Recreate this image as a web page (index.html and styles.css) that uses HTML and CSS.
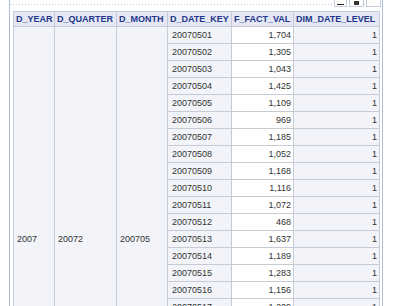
FILE: index.html
```html
<!DOCTYPE html>
<html>
<head>
<meta charset="utf-8">
<link rel="stylesheet" href="styles.css">
</head>
<body>
<div class="portlet">
  <div class="toolbar">
    <span class="tbtn"><span class="min"></span></span>
    <span class="tbtn wide"><span class="sq"></span></span>
    <span class="tbtn wide"></span>
  </div>
  <div class="content">
    <table class="grid">
      <colgroup>
        <col class="c1"><col class="c2"><col class="c3"><col class="c4"><col class="c5"><col class="c6">
      </colgroup>
      <thead>
        <tr><th>D_YEAR</th><th>D_QUARTER</th><th>D_MONTH</th><th>D_DATE_KEY</th><th>F_FACT_VAL</th><th>DIM_DATE_LEVEL</th></tr>
      </thead>
      <tbody>
        <tr><td class="grp" rowspan="25">2007</td><td class="grp" rowspan="25">20072</td><td class="grp" rowspan="25">200705</td><td class="key">20070501</td><td class="num">1,704</td><td class="lvl">1</td></tr>
        <tr><td class="key">20070502</td><td class="num">1,305</td><td class="lvl">1</td></tr>
        <tr><td class="key">20070503</td><td class="num">1,043</td><td class="lvl">1</td></tr>
        <tr><td class="key">20070504</td><td class="num">1,425</td><td class="lvl">1</td></tr>
        <tr><td class="key">20070505</td><td class="num">1,109</td><td class="lvl">1</td></tr>
        <tr><td class="key">20070506</td><td class="num">969</td><td class="lvl">1</td></tr>
        <tr><td class="key">20070507</td><td class="num">1,185</td><td class="lvl">1</td></tr>
        <tr><td class="key">20070508</td><td class="num">1,052</td><td class="lvl">1</td></tr>
        <tr><td class="key">20070509</td><td class="num">1,168</td><td class="lvl">1</td></tr>
        <tr><td class="key">20070510</td><td class="num">1,116</td><td class="lvl">1</td></tr>
        <tr><td class="key">20070511</td><td class="num">1,072</td><td class="lvl">1</td></tr>
        <tr><td class="key">20070512</td><td class="num">468</td><td class="lvl">1</td></tr>
        <tr><td class="key">20070513</td><td class="num">1,637</td><td class="lvl">1</td></tr>
        <tr><td class="key">20070514</td><td class="num">1,189</td><td class="lvl">1</td></tr>
        <tr><td class="key">20070515</td><td class="num">1,283</td><td class="lvl">1</td></tr>
        <tr><td class="key">20070516</td><td class="num">1,156</td><td class="lvl">1</td></tr>
        <tr><td class="key">20070517</td><td class="num">1,209</td><td class="lvl">1</td></tr>
        <tr><td class="key">20070518</td><td class="num">1,094</td><td class="lvl">1</td></tr>
        <tr><td class="key">20070519</td><td class="num">1,011</td><td class="lvl">1</td></tr>
        <tr><td class="key">20070520</td><td class="num">987</td><td class="lvl">1</td></tr>
        <tr><td class="key">20070521</td><td class="num">1,142</td><td class="lvl">1</td></tr>
        <tr><td class="key">20070522</td><td class="num">1,236</td><td class="lvl">1</td></tr>
        <tr><td class="key">20070523</td><td class="num">1,178</td><td class="lvl">1</td></tr>
        <tr><td class="key">20070524</td><td class="num">1,065</td><td class="lvl">1</td></tr>
        <tr><td class="key">20070525</td><td class="num">1,121</td><td class="lvl">1</td></tr>
      </tbody>
    </table>
  </div>
</div>
</body>
</html>
```
FILE: styles.css
```css
html, body {
  margin: 0;
  padding: 0;
  background: #ffffff;
  overflow: hidden;
}
body {
  font-family: "Liberation Sans", Arial, sans-serif;
  font-size: 9px;
  color: #333333;
}
.portlet {
  margin-left: 9px;
  width: 372px;
  border-left: 1px solid #a9bbd6;
  border-right: 1px solid #a9bbd6;
  height: 320px;
}
.toolbar {
  height: 11px;
  display: flex;
  justify-content: flex-end;
  align-items: flex-start;
  gap: 2px;
  padding-right: 1px;
  background-image: repeating-linear-gradient(90deg, #c3cde0 0 1px, transparent 1px 3px);
  background-size: 100% 1px;
  background-position: 0 4px;
  background-repeat: no-repeat;
}
.tbtn {
  display: flex;
  align-items: flex-end;
  justify-content: center;
  box-sizing: border-box;
  width: 13px;
  height: 9px;
  margin-top: -2px;
  border: 1px solid #c6cedc;
  background: #ffffff;
}
.tbtn.wide {
  width: 15px;
}
.min {
  width: 7px;
  height: 1px;
  background: #222222;
  margin-bottom: 1px;
}
.sq {
  width: 5px;
  height: 4px;
  background: #333333;
  margin-bottom: 1px;
}
.content {
  padding-left: 3px;
}
.grid {
  border-collapse: collapse;
  table-layout: fixed;
  width: 366px;
}
.c1 { width: 41px; }
.c2 { width: 62px; }
.c3 { width: 51px; }
.c4 { width: 64px; }
.c5 { width: 62px; }
.c6 { width: 86px; }
.grid th,
.grid td {
  border: 1px solid #c7cbd6;
  padding: 0 2px 0 3px;
  white-space: nowrap;
  overflow: hidden;
  line-height: 10px;
}
.grid th {
  height: 14px;
  background: #e5e8f4;
  color: #23368a;
  font-weight: bold;
  text-align: left;
  padding-left: 2px;
}
.grid td {
  height: 16px;
  background: #f2f4f9;
}
.grid td.grp {
  vertical-align: middle;
}
.grid td.key {
  padding-left: 4px;
}
.grid td.num {
  background: #ffffff;
  text-align: right;
}
.grid td.lvl {
  text-align: right;
}
```
